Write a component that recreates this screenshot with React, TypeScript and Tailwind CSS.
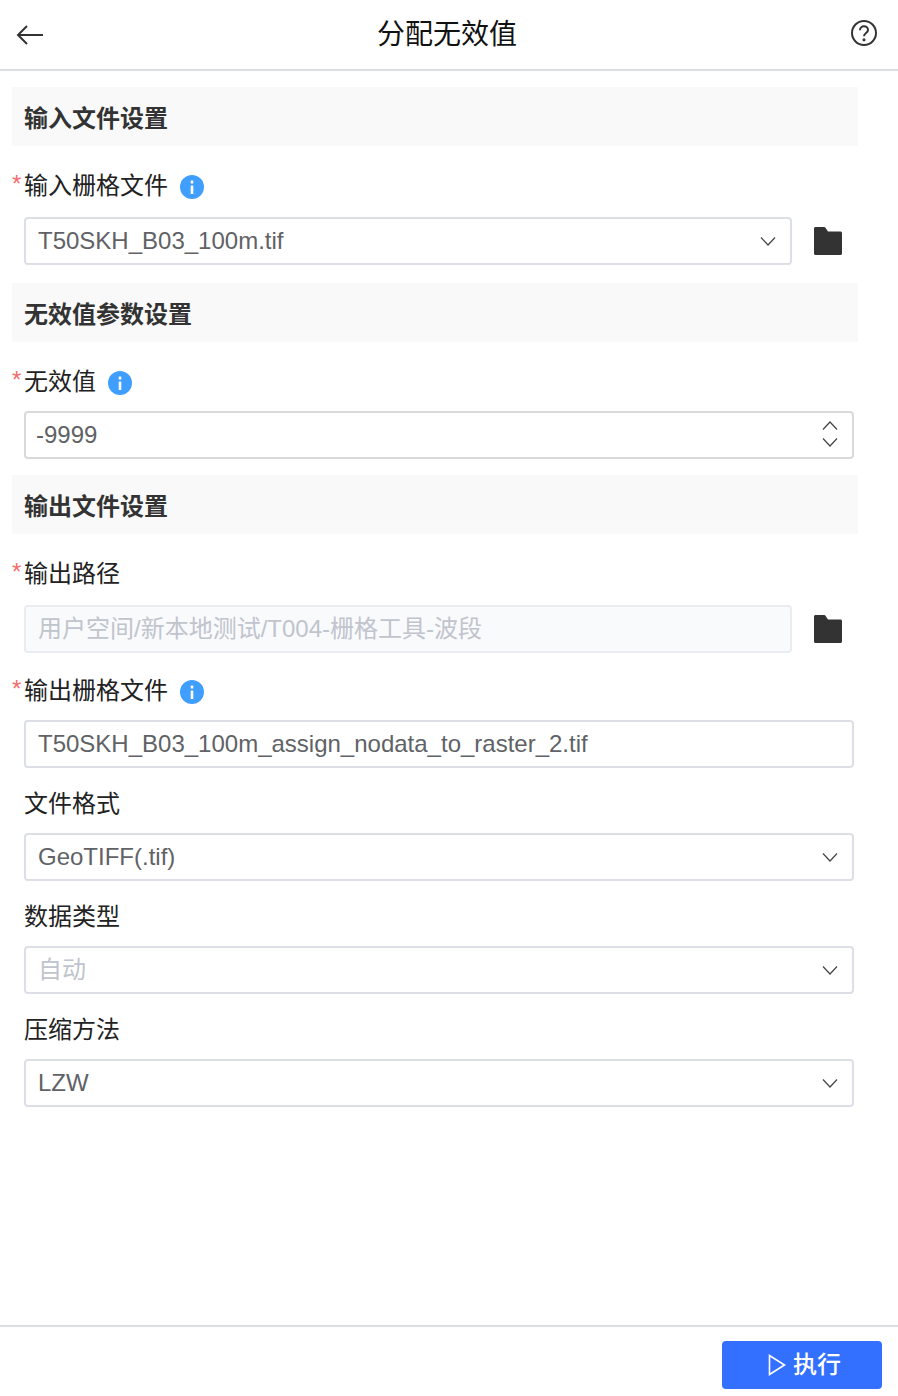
const font = { fontFamily: '"Liberation Sans", "Noto Sans CJK SC", sans-serif' };

function Section({ title, className }: { title: string; className: string }) {
  return (
    <div className={`ml-3 flex h-[59px] w-[846px] items-center bg-[#f9f9f9] pl-3 pt-1 text-[24px] font-bold text-[#333] ${className}`}>
      {title}
    </div>
  );
}

function Label({ text, required, info, className }: { text: string; required?: boolean; info?: boolean; className: string }) {
  return (
    <div className={`relative flex h-[34px] items-center pl-6 text-[24px] text-[#222] ${className}`}>
      {required && <span className="absolute left-[12px] top-[3px] text-[24px] leading-[24px] text-[#f56c6c]">*</span>}
      {text}
      {info && (
        <svg className="ml-3 mt-[2px]" width="24" height="24" viewBox="0 0 24 24">
          <circle cx="12" cy="12" r="12" fill="#409eff" />
          <rect x="10.700" y="10.500" width="2.600" height="8.500" rx="0.500" fill="#fff" />
          <rect x="10.700" y="5.500" width="2.600" height="3" rx="0.500" fill="#fff" />
        </svg>
      )}
    </div>
  );
}

function Folder() {
  return (
    <svg className="ml-[22px]" width="28" height="28" viewBox="0 0 28 28">
      <path d="M0 1.500C0 .7.7 0 1.500 0h8.700c.5 0 .9.2 1.100.6L14 4.600h12.500c.8 0 1.500.7 1.500 1.500v20.400c0 .8-.7 1.500-1.500 1.500h-25C.7 28 0 27.300 0 26.500z" fill="#333" />
    </svg>
  );
}

function Chevron({ up }: { up?: boolean }) {
  return (
    <svg width="16" height="9" viewBox="0 0 16 9" fill="none" stroke="#444" strokeWidth="1.200">
      <path d={up ? "M1 8.500 8 1l7 7.500" : "M1 .5 8 8l7-7.500"} />
    </svg>
  );
}

function Field({ value, width, disabled, muted, chevron }: { value: string; width: string; disabled?: boolean; muted?: boolean; chevron?: boolean }) {
  return (
    <div className={`flex h-12 items-center justify-between rounded border-2 pl-3 pr-[14px] text-[24px] ${width} ${disabled ? "border-[#e9ecf1] bg-[#f9fafc] text-[#c0c4cc]" : "border-[#dcdfe6] bg-white text-[#606266]"}`}>
      <span className={muted ? "text-[#c0c4cc]" : undefined}>{value}</span>
      {chevron && <Chevron />}
    </div>
  );
}

export default function App() {
  return (
    <div className="flex h-[1396px] w-[898px] flex-col bg-white" style={font}>
      <header className="relative flex h-[71px] shrink-0 items-center justify-between border-b-2 border-[#dcdfe6] pl-4 pr-[21px]">
        <svg width="28" height="22" viewBox="0 0 28 22" fill="none" stroke="#333" strokeWidth="2">
          <path d="M27 11H2M11 2l-9 9 9 9" />
        </svg>
        <h1 className="absolute left-0 right-[4px] top-[1px] text-center text-[28px] leading-[68px] font-normal text-[#111]">分配无效值</h1>
        <svg className="-mt-1" width="26" height="26" viewBox="0 0 26 26" fill="none" stroke="#333" strokeWidth="2">
          <circle cx="13" cy="13" r="12" />
          <path d="M9 10.300c0-2.300 1.800-4 4-4s4 1.600 4 3.700c0 3-4 3-4 6.200" />
          <circle cx="13" cy="19.800" r="0.600" fill="#333" />
        </svg>
      </header>

      <main className="flex-1">
        <Section title="输入文件设置" className="mt-4" />
        <Label text="输入栅格文件" required info className="mt-[23px]" />
        <div className="mt-[14px] ml-6 flex items-center">
          <Field value="T50SKH_B03_100m.tif" width="w-[768px]" chevron />
          <Folder />
        </div>

        <Section title="无效值参数设置" className="mt-[18px]" />
        <Label text="无效值" required info className="mt-[23px]" />
        <div className="ml-6 mt-3 flex h-12 w-[830px] items-center justify-between rounded border-2 border-[#d9d9d9] pl-[10px] pr-[14px] text-[24px] text-[#606266]">
          <span>-9999</span>
          <div className="-mt-[2px] flex flex-col items-center gap-2">
            <Chevron up />
            <Chevron />
          </div>
        </div>

        <Section title="输出文件设置" className="mt-4" />
        <Label text="输出路径" required className="mt-[23px]" />
        <div className="mt-[14px] ml-6 flex items-center">
          <Field value="用户空间/新本地测试/T004-栅格工具-波段" width="w-[768px]" disabled />
          <Folder />
        </div>

        <Label text="输出栅格文件" required info className="mt-[21px]" />
        <div className="ml-6 mt-3">
          <Field value="T50SKH_B03_100m_assign_nodata_to_raster_2.tif" width="w-[830px]" />
        </div>

        <Label text="文件格式" className="mt-[19px]" />
        <div className="ml-6 mt-3">
          <Field value="GeoTIFF(.tif)" width="w-[830px]" chevron />
        </div>

        <Label text="数据类型" className="mt-[19px]" />
        <div className="ml-6 mt-3">
          <Field value="自动" width="w-[830px]" muted chevron />
        </div>

        <Label text="压缩方法" className="mt-[19px]" />
        <div className="ml-6 mt-3">
          <Field value="LZW" width="w-[830px]" chevron />
        </div>
      </main>

      <footer className="flex h-[71px] shrink-0 items-start justify-end border-t-2 border-[#dcdfe6] pr-4 pt-[14px]">
        <button className="flex h-12 w-40 items-center justify-center gap-[7px] rounded-[4px] bg-[#3370ff] pl-[5px] text-[24px] font-medium text-white">
          <svg width="18" height="22" viewBox="0 0 18 22" fill="none" stroke="#fff" strokeWidth="1.600">
            <path d="M1.500 1.500v19L16.500 11z" />
          </svg>
          执行
        </button>
      </footer>
    </div>
  );
}
